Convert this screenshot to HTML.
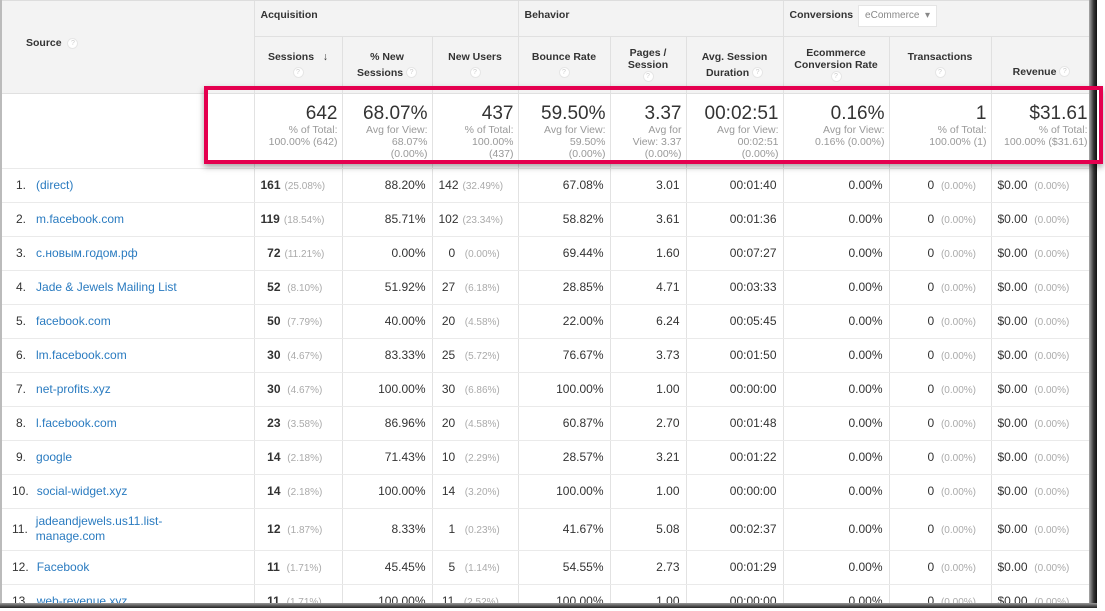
<!DOCTYPE html>
<html><head><meta charset="utf-8"><style>
*{box-sizing:border-box;margin:0;padding:0}
body{width:1105px;height:611px;background:#fff;font-family:"Liberation Sans",Arial,sans-serif;position:relative;overflow:hidden;color:#333}
#wrap{position:absolute;left:0;top:0;width:1094px;height:607px;overflow:hidden;border-top:1px solid #ddd}
#edgeL{position:absolute;left:0;top:0;width:2px;height:607px;background:#bbb}
#edgeR{position:absolute;left:1089px;top:0;width:8px;height:608px;background:linear-gradient(to right,#aaa,#333 60%,#111)}
#edgeB{position:absolute;left:0;top:603px;width:1097px;height:5px;background:linear-gradient(to bottom,#999,#222)}
table{border-collapse:collapse;table-layout:fixed;width:1092px;font-size:12px}
td{border-right:1px solid #e2e2e2;border-bottom:1px solid #eaeaea;vertical-align:middle;overflow:hidden;white-space:nowrap}
.h{background:#f3f3f3;font-weight:bold;font-size:10.5px;color:#333;text-align:center;border-color:#e0e0e0;line-height:16px}
.g{text-align:left;padding-left:6px;vertical-align:top;padding-top:6px;height:35px}
.q{display:inline-block;width:11px;height:11px;border-radius:50%;background:#fff;border:1px solid #e6e6e6;color:#ccc;font-size:7px;line-height:10px;text-align:center;font-weight:normal;vertical-align:middle}
.t td{height:75px;text-align:right;padding-right:4px;vertical-align:top;padding-top:9px}
.big{font-size:19px;color:#333;line-height:21px}
.sm{font-size:10.5px;color:#999;line-height:12px}
.r td{height:34px;text-align:right;padding-right:6px}
.r td.s{text-align:left;padding-left:16px}
.r td.s a{color:#2a7bc0;text-decoration:none;margin-left:10px}
.p{font-size:10px;color:#aaa;margin-left:4px}
b{font-weight:bold}
.lft{text-align:left!important;padding-left:6px!important}
#red{position:absolute;left:204px;top:86px;width:899px;height:78px;border:4px solid #e4004f;box-shadow:0 3px 6px rgba(0,0,0,.35)}
</style></head><body>
<div id="wrap">
<table>
<colgroup><col style="width:254px"><col style="width:88px"><col style="width:90px"><col style="width:86px"><col style="width:92px"><col style="width:76px"><col style="width:97px"><col style="width:106px"><col style="width:102px"><col style="width:101px"></colgroup>
<tr><td class="h" rowspan="2" style="text-align:left;padding-left:26px;vertical-align:top;padding-top:34px;height:92px">Source &nbsp;<span class="q">?</span></td>
<td class="h g" colspan="3">Acquisition</td>
<td class="h g" colspan="3">Behavior</td>
<td class="h g" colspan="3" style="padding-top:4px">Conversions <span style="display:inline-block;background:#fff;border:1px solid #e5e5e5;color:#888;font-weight:normal;font-size:10px;padding:2px 6px;margin-left:2px">eCommerce &nbsp;▾</span></td></tr>
<tr style="height:57px">
<td class="h">Sessions &nbsp;&nbsp;↓<br><span class="q">?</span></td>
<td class="h">% New<br>Sessions <span class="q">?</span></td>
<td class="h">New Users<br><span class="q">?</span></td>
<td class="h">Bounce Rate<br><span class="q">?</span></td>
<td class="h" style="line-height:12px">Pages /<br>Session<br><span class="q">?</span></td>
<td class="h">Avg. Session<br>Duration <span class="q">?</span></td>
<td class="h" style="line-height:12px">Ecommerce<br>Conversion Rate<br><span class="q">?</span></td>
<td class="h">Transactions<br><span class="q">?</span></td>
<td class="h" style="padding-top:14px">Revenue <span class="q">?</span></td></tr>
<tr class="t"><td></td>
<td><div class="big">642</div><div class="sm">% of Total:<br>100.00% (642)</div></td>
<td><div class="big">68.07%</div><div class="sm">Avg for View:<br>68.07%<br>(0.00%)</div></td>
<td><div class="big">437</div><div class="sm">% of Total:<br>100.00%<br>(437)</div></td>
<td><div class="big">59.50%</div><div class="sm">Avg for View:<br>59.50%<br>(0.00%)</div></td>
<td><div class="big">3.37</div><div class="sm">Avg for<br>View: 3.37<br>(0.00%)</div></td>
<td><div class="big">00:02:51</div><div class="sm">Avg for View:<br>00:02:51<br>(0.00%)</div></td>
<td><div class="big">0.16%</div><div class="sm">Avg for View:<br>0.16% (0.00%)</div></td>
<td><div class="big">1</div><div class="sm">% of Total:<br>100.00% (1)</div></td>
<td><div class="big">$31.61</div><div class="sm">% of Total:<br>100.00% ($31.61)</div></td></tr>
<tr class="r"><td class="s">1.<a>(direct)</a></td><td class="lft"><b>161</b><span class="p">(25.08%)</span></td><td>88.20%</td><td class="lft">142<span class="p">(32.49%)</span></td><td>67.08%</td><td>3.01</td><td>00:01:40</td><td>0.00%</td><td class="lft" style="padding-left:38px!important">0<span class="p">&nbsp;(0.00%)</span></td><td class="lft">$0.00<span class="p">&nbsp;(0.00%)</span></td></tr>
<tr class="r"><td class="s">2.<a>m.facebook.com</a></td><td class="lft"><b>119</b><span class="p">(18.54%)</span></td><td>85.71%</td><td class="lft">102<span class="p">(23.34%)</span></td><td>58.82%</td><td>3.61</td><td>00:01:36</td><td>0.00%</td><td class="lft" style="padding-left:38px!important">0<span class="p">&nbsp;(0.00%)</span></td><td class="lft">$0.00<span class="p">&nbsp;(0.00%)</span></td></tr>
<tr class="r"><td class="s">3.<a>с.новым.годом.рф</a></td><td class="lft">&nbsp;&nbsp;<b>72</b><span class="p">(11.21%)</span></td><td>0.00%</td><td class="lft">&nbsp;&nbsp;&nbsp;0<span class="p">&nbsp;&nbsp;(0.00%)</span></td><td>69.44%</td><td>1.60</td><td>00:07:27</td><td>0.00%</td><td class="lft" style="padding-left:38px!important">0<span class="p">&nbsp;(0.00%)</span></td><td class="lft">$0.00<span class="p">&nbsp;(0.00%)</span></td></tr>
<tr class="r"><td class="s">4.<a>Jade &amp; Jewels Mailing List</a></td><td class="lft">&nbsp;&nbsp;<b>52</b><span class="p">&nbsp;(8.10%)</span></td><td>51.92%</td><td class="lft">&nbsp;27<span class="p">&nbsp;&nbsp;(6.18%)</span></td><td>28.85%</td><td>4.71</td><td>00:03:33</td><td>0.00%</td><td class="lft" style="padding-left:38px!important">0<span class="p">&nbsp;(0.00%)</span></td><td class="lft">$0.00<span class="p">&nbsp;(0.00%)</span></td></tr>
<tr class="r"><td class="s">5.<a>facebook.com</a></td><td class="lft">&nbsp;&nbsp;<b>50</b><span class="p">&nbsp;(7.79%)</span></td><td>40.00%</td><td class="lft">&nbsp;20<span class="p">&nbsp;&nbsp;(4.58%)</span></td><td>22.00%</td><td>6.24</td><td>00:05:45</td><td>0.00%</td><td class="lft" style="padding-left:38px!important">0<span class="p">&nbsp;(0.00%)</span></td><td class="lft">$0.00<span class="p">&nbsp;(0.00%)</span></td></tr>
<tr class="r"><td class="s">6.<a>lm.facebook.com</a></td><td class="lft">&nbsp;&nbsp;<b>30</b><span class="p">&nbsp;(4.67%)</span></td><td>83.33%</td><td class="lft">&nbsp;25<span class="p">&nbsp;&nbsp;(5.72%)</span></td><td>76.67%</td><td>3.73</td><td>00:01:50</td><td>0.00%</td><td class="lft" style="padding-left:38px!important">0<span class="p">&nbsp;(0.00%)</span></td><td class="lft">$0.00<span class="p">&nbsp;(0.00%)</span></td></tr>
<tr class="r"><td class="s">7.<a>net-profits.xyz</a></td><td class="lft">&nbsp;&nbsp;<b>30</b><span class="p">&nbsp;(4.67%)</span></td><td>100.00%</td><td class="lft">&nbsp;30<span class="p">&nbsp;&nbsp;(6.86%)</span></td><td>100.00%</td><td>1.00</td><td>00:00:00</td><td>0.00%</td><td class="lft" style="padding-left:38px!important">0<span class="p">&nbsp;(0.00%)</span></td><td class="lft">$0.00<span class="p">&nbsp;(0.00%)</span></td></tr>
<tr class="r"><td class="s">8.<a>l.facebook.com</a></td><td class="lft">&nbsp;&nbsp;<b>23</b><span class="p">&nbsp;(3.58%)</span></td><td>86.96%</td><td class="lft">&nbsp;20<span class="p">&nbsp;&nbsp;(4.58%)</span></td><td>60.87%</td><td>2.70</td><td>00:01:48</td><td>0.00%</td><td class="lft" style="padding-left:38px!important">0<span class="p">&nbsp;(0.00%)</span></td><td class="lft">$0.00<span class="p">&nbsp;(0.00%)</span></td></tr>
<tr class="r"><td class="s">9.<a>google</a></td><td class="lft">&nbsp;&nbsp;<b>14</b><span class="p">&nbsp;(2.18%)</span></td><td>71.43%</td><td class="lft">&nbsp;10<span class="p">&nbsp;&nbsp;(2.29%)</span></td><td>28.57%</td><td>3.21</td><td>00:01:22</td><td>0.00%</td><td class="lft" style="padding-left:38px!important">0<span class="p">&nbsp;(0.00%)</span></td><td class="lft">$0.00<span class="p">&nbsp;(0.00%)</span></td></tr>
<tr class="r"><td class="s" style="padding-left:12px">10.<a style="margin-left:8px">social-widget.xyz</a></td><td class="lft">&nbsp;&nbsp;<b>14</b><span class="p">&nbsp;(2.18%)</span></td><td>100.00%</td><td class="lft">&nbsp;14<span class="p">&nbsp;&nbsp;(3.20%)</span></td><td>100.00%</td><td>1.00</td><td>00:00:00</td><td>0.00%</td><td class="lft" style="padding-left:38px!important">0<span class="p">&nbsp;(0.00%)</span></td><td class="lft">$0.00<span class="p">&nbsp;(0.00%)</span></td></tr>
<tr class="r" style="height:42px"><td class="s" style="padding-left:12px;height:42px"><span style="float:left;margin-top:8px">11.</span><a style="margin-left:8px;display:inline-block;line-height:15px">jadeandjewels.us11.list-<br>manage.com</a></td><td class="lft">&nbsp;&nbsp;<b>12</b><span class="p">&nbsp;(1.87%)</span></td><td>8.33%</td><td class="lft">&nbsp;&nbsp;&nbsp;1<span class="p">&nbsp;&nbsp;(0.23%)</span></td><td>41.67%</td><td>5.08</td><td>00:02:37</td><td>0.00%</td><td class="lft" style="padding-left:38px!important">0<span class="p">&nbsp;(0.00%)</span></td><td class="lft">$0.00<span class="p">&nbsp;(0.00%)</span></td></tr>
<tr class="r"><td class="s" style="padding-left:12px">12.<a style="margin-left:8px">Facebook</a></td><td class="lft">&nbsp;&nbsp;<b>11</b><span class="p">&nbsp;(1.71%)</span></td><td>45.45%</td><td class="lft">&nbsp;&nbsp;&nbsp;5<span class="p">&nbsp;&nbsp;(1.14%)</span></td><td>54.55%</td><td>2.73</td><td>00:01:29</td><td>0.00%</td><td class="lft" style="padding-left:38px!important">0<span class="p">&nbsp;(0.00%)</span></td><td class="lft">$0.00<span class="p">&nbsp;(0.00%)</span></td></tr>
<tr class="r"><td class="s" style="padding-left:12px">13.<a style="margin-left:8px">web-revenue.xyz</a></td><td class="lft">&nbsp;&nbsp;<b>11</b><span class="p">&nbsp;(1.71%)</span></td><td>100.00%</td><td class="lft">&nbsp;11<span class="p">&nbsp;&nbsp;(2.52%)</span></td><td>100.00%</td><td>1.00</td><td>00:00:00</td><td>0.00%</td><td class="lft" style="padding-left:38px!important">0<span class="p">&nbsp;(0.00%)</span></td><td class="lft">$0.00<span class="p">&nbsp;(0.00%)</span></td></tr>
</table>
</div>
<div id="edgeL"></div>
<div id="edgeR"></div>
<div id="edgeB"></div>
<div id="red"></div>
</body></html>
